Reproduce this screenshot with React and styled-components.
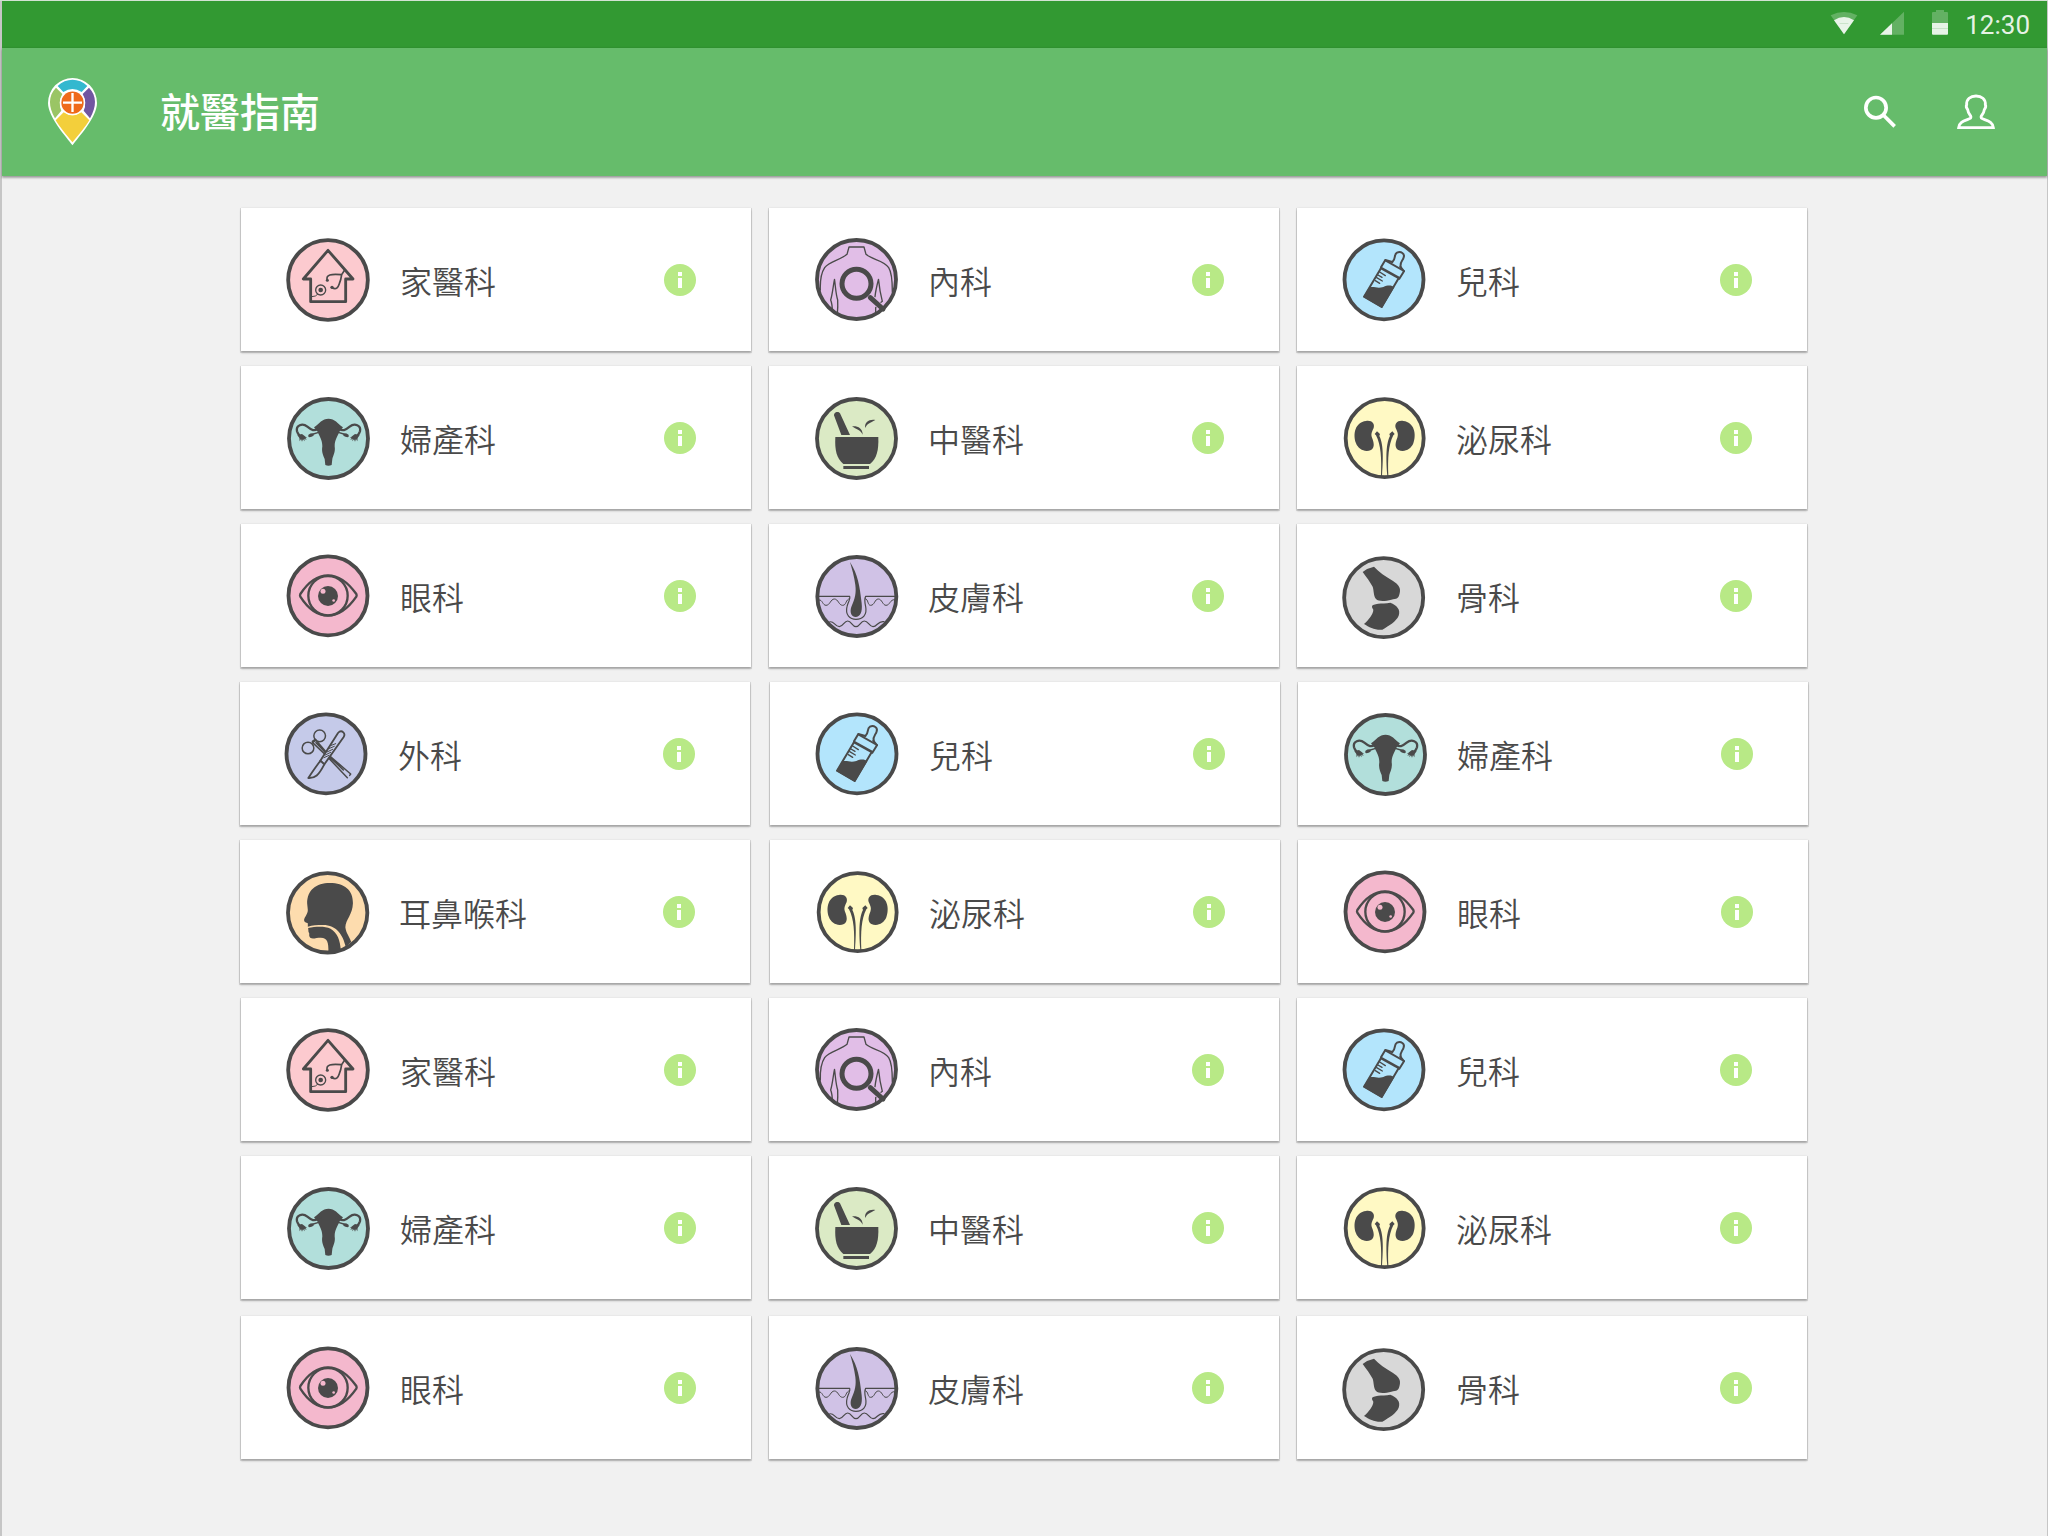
import React from "react";
import styled, { createGlobalStyle } from "styled-components";

const INK = "#4a4a4a";

const GlobalStyle = createGlobalStyle`
  * { box-sizing: border-box; }
  body {
    margin: 0;
    background: #c6c6c6;
    font-family: "Noto Sans CJK TC", "Noto Sans", sans-serif;
    color: ${INK};
  }
`;

const Screen = styled.div`
  width: 2048px;
  height: 1536px;
  padding: 1px 1px 0 2px;
  display: flex;
  flex-direction: column;
  overflow: hidden;
  background: linear-gradient(#d3e3d3 1px, #c6c6c6 1px);
`;

const StatusBar = styled.div`
  height: 47px;
  flex: none;
  display: flex;
  align-items: flex-start;
  justify-content: flex-end;
  padding: 9px 17px 0 0;
  background: #329932;
`;

const StatusGlyph = styled.svg`
  display: block;
  flex: none;
  margin-right: ${(p) => p.$after}px;
`;

const Clock = styled.time`
  font-family: Roboto, sans-serif;
  font-size: 26px;
  line-height: 30px;
  color: rgba(255, 255, 255, 0.9);
`;

const AppBar = styled.header`
  height: 128px;
  flex: none;
  display: flex;
  align-items: center;
  padding: 0 52px 0 46px;
  background: #66bc6b;
  box-shadow: 0 2px 2px rgba(0, 0, 0, 0.3), 0 0 2px rgba(0, 0, 0, 0.16);
  z-index: 1;
`;

const Logo = styled.svg`
  display: block;
  width: 49px;
  height: 68px;
`;

const Title = styled.h1`
  margin: 0 auto 5px 63px;
  font-size: 40px;
  line-height: 60px;
  font-weight: 500;
  color: #fff;
`;

const BarButton = styled.button`
  display: block;
  padding: 0;
  margin-left: ${(p) => p.$gap}px;
  border: 0;
  background: none;
  color: #fff;
  svg { display: block; }
`;

const Content = styled.main`
  flex: 1;
  padding: 32px 0 0 239px;
  background: #f1f1f1;
`;

const Row = styled.div`
  display: grid;
  grid-template-columns: ${(p) => (p.$spread ? "512px" : "510px")} 510px 510px;
  column-gap: 18px;
  margin: 0 0 ${(p) => p.$after}px ${(p) => (p.$spread ? "-1px" : "0")};
`;

const Card = styled.article`
  width: 510px;
  height: 143px;
  display: flex;
  align-items: flex-start;
  padding: 30px 55px 0 ${(p) => p.$inset}px;
  background: #fff;
  box-shadow:
    0 1px 0 1px rgba(0, 0, 0, 0.09),
    0 2px 2px rgba(0, 0, 0, 0.22),
    0 0 2px rgba(0, 0, 0, 0.1);
`;

const Badge = styled.svg`
  display: block;
  width: 84px;
  height: 84px;
  flex: none;
  overflow: visible;
`;

const Name = styled.h2`
  margin: 18px auto 0 30px;
  font-size: 32px;
  line-height: 48px;
  font-weight: 350;
`;

const InfoButton = styled.button`
  width: 32px;
  height: 32px;
  margin-top: 26px;
  padding: 8px 0 0;
  display: flex;
  flex-direction: column;
  align-items: center;
  gap: 2px;
  border: 0;
  border-radius: 50%;
  background: #b8e986;
  &::before { content: ""; width: 4px; height: 4px; background: #fff; }
  &::after { content: ""; width: 4px; height: 10px; background: #fff; }
`;

function Disc({ cx, cy, r, fill }) {
  return <circle cx={cx} cy={cy} r={r} fill={fill} stroke={INK} strokeWidth="11.5" />;
}

const line = { fill: "none", stroke: INK, strokeLinecap: "round", strokeLinejoin: "round" };

function FamilyIcon() {
  return (
    <Badge viewBox="168 144 252 252">
      <Disc cx={294} cy={270} r={119.5} fill="#fccacf" />
      <g {...line}>
        <path strokeWidth="8.5" d="M294 181 L220 267 H242 V335 H347 V267 H369 Z" />
        <circle cx="272" cy="300" r="15" strokeWidth="4" />
        <path strokeWidth="3" d="M263 313 Q258 320 246 320" />
        <path strokeWidth="5" d="M292 271 C286 254 304 251 334 254" />
        <path strokeWidth="5" d="M306 293 C320 301 325 290 328 281 C333 269 334 262 335 254 L344 240" />
      </g>
      <circle cx="272" cy="300" r="7" fill={INK} />
      <circle cx="292" cy="271" r="4.5" fill={INK} />
      <circle cx="306" cy="292" r="5" fill={INK} />
    </Badge>
  );
}

function InternalIcon() {
  return (
    <Badge viewBox="102 114 252 252">
      <Disc cx={229.5} cy={238.5} r={118.5} fill="#e1bee7" />
      <g {...line} strokeWidth="4">
        <path d="M121 270 C120 240 124 218 134 203 C148 183 182 180 201 163 L207 141 H252 L258 163 C277 180 311 180 326 203 C336 218 337 242 337 275" />
        <path d="M157 335 C157 322 157 312 152 300 C158 280 159 260 163.500 238 C167 262 167 280 173 300 C174 318 173 330 172 342" />
        <path d="M285 290 C287 270 291 255 295.500 238 C298 262 302 285 307 304 L303 307" />
        <path d="M287 322 V340" />
      </g>
      <circle cx="229.500" cy="251.500" r="43.500" fill="none" stroke={INK} strokeWidth="15" />
      <path d="M271 293 L309 327" fill="none" stroke={INK} strokeWidth="15" strokeLinecap="round" />
    </Badge>
  );
}

function PediatricIcon() {
  return (
    <Badge viewBox="156 114 252 252">
      <Disc cx={282} cy={239.5} r={118.5} fill="#b3e5fc" />
      <g {...line}>
        <path strokeWidth="6" d="M273 202 L286 180 L307 186 M331 200 L342 214 L328 236" />
        <path strokeWidth="6" d="M286 181 L342 213" />
        <path strokeWidth="6" d="M307 186 C319 178 310 164 321 158 C333 153 345 161 341 172 C339 183 329 184 332 202" />
        <path strokeWidth="8" strokeLinecap="butt" d="M271 203 L329 235" />
        <path strokeWidth="6" d="M272 206 L222 290 L275 321 L325 236" />
        <path strokeWidth="4" d="M269 216 L286 227 M264 225 L276 232 M260 233 L277 243 M256 242 L269 250" />
      </g>
      <path fill={INK} d="M238 262 C255 259 262 267 280 261 C293 255 305 255 313 262 L276 324 L220 291 Z" />
    </Badge>
  );
}

function GynecologyIcon() {
  const side = (
    <g>
      <path {...line} strokeWidth="7" d="M312 671 C330 684 338 678 350 668 C365 656 385 664 381 682 C379 690 375 693 370 698" />
      <path fill={INK} d="M366 690 L380 693 L374 702 L373 712 L369 705 L366 713 L363 706 L358 712 L359 704 L352 708 L356 701 L350 703 L358 696 Z" />
      <path {...line} strokeWidth="4" d="M316 685 L332 690" />
      <ellipse cx="339" cy="693.500" rx="9" ry="5" transform="rotate(20 339 693.500)" fill={INK} />
    </g>
  );
  return (
    <Badge viewBox="159 576 252 252">
      <Disc cx={286.5} cy={703.5} r={118.5} fill="#b2dfdb" />
      <path
        fill={INK}
        d="M286.500 644 C305 644 314 658 330 670 L320 682 C313 698 305 708 305 727 C308 745 300 755 298 765 L296 783 Q286 788 277 783 L275 765 C271 755 265 745 268 727 C268 708 260 698 253 682 L243 670 C259 658 268 644 286.500 644 Z"
      />
      {side}
      <g transform="translate(573 0) scale(-1 1)">{side}</g>
    </Badge>
  );
}

function ChineseMedicineIcon() {
  return (
    <Badge viewBox="102 588 252 252">
      <Disc cx={229.5} cy={715.5} r={118.5} fill="#dbeac5" />
      <g fill={INK}>
        <path d="M163 649 C158 638 174 631 180 640 L210 705 H184 Z" />
        <path d="M166 711 H295 C296 752 291 774 270 792 H190 C170 775 164 752 166 711 Z" />
        <path d="M190 798 H267 V807 H190 Z" />
        <path d="M216 679 C232 677 248 684 248 704 C241 690 232 690 216 679 Z" />
        <path d="M286 660 C270 656 251 667 256 684 C261 670 270 670 286 660 Z" />
      </g>
    </Badge>
  );
}

function UrologyIcon() {
  const side = (
    <g fill={INK}>
      <path d="M228 663 C246 660 255 672 251 684 C246 695 242 702 246 713 C251 725 256 742 243 750 C225 758 205 748 198 730 C188 702 195 667 228 663 Z" />
      <path d="M254 702 L261 694 L270 702 L268 708 C277 725 282 755 276 828 L273 828 C275 775 273 735 258 706 Z" />
    </g>
  );
  return (
    <Badge viewBox="156 588 252 252">
      <Disc cx={284} cy={714.5} r={117} fill="#fff9c4" />
      {side}
      <g transform="translate(568 0) scale(-1 1)">{side}</g>
    </Badge>
  );
}

function EyeIcon() {
  return (
    <Badge viewBox="168 102 252 252">
      <Disc cx={294} cy={227.5} r={118.5} fill="#f4b8cd" />
      <g {...line} strokeWidth="7">
        <circle cx="294" cy="227" r="59" />
        <path d="M211 222 C232 190 260 166 294 166 C328 166 356 190 379 222 Q381 226 379 230 C356 263 328 287 294 287 C260 287 232 263 211 230 Q209 226 211 222 Z" />
      </g>
      <circle cx="294" cy="228" r="30" fill={INK} />
      <circle cx="279" cy="214" r="7.500" fill="#f4b8cd" />
      <circle cx="311" cy="241.500" r="4" fill="#f4b8cd" />
    </Badge>
  );
}

function SkinIcon() {
  return (
    <Badge viewBox="102 102 252 252">
      <Disc cx={230.5} cy={229.5} r={118.5} fill="#d0c2e6" />
      <g {...line} strokeWidth="3.600">
        <path d="M116 229 H209 C213 238 204 245 201 260 C195 285 210 298 228 298 C248 298 262 285 257 260 C254 245 252 237 257 229 H345" />
        <path strokeWidth="3" d="M118 240 C127 238 128 256 138 256 C150 256 152 237 163 237 C175 237 176 256 188 256 C200 256 196 238 209 236" />
        <path strokeWidth="3" d="M256 236 C266 238 262 256 272 256 C284 256 284 237 295 237 C306 237 308 256 318 256 C330 256 330 238 343 239" />
        <path d="M146 307 C160 298 164 320 178 320 C190 320 192 303 203 303 C215 303 216 320 228 320 C240 320 241 303 253 303 C265 303 268 320 279 320 C292 320 294 301 312 305" />
      </g>
      <path fill={INK} d="M210 126 C234 165 239 195 245 250 C248 278 240 291 227 291 C213 291 208 275 215 258 C225 235 229 220 226 195 C223 170 216 148 210 126 Z" />
    </Badge>
  );
}

function BoneIcon() {
  return (
    <Badge viewBox="156 102 252 252">
      <Disc cx={281} cy={233} r={118.5} fill="#d8d8d8" />
      <g fill={INK}>
        <path d="M218 156 Q232 144 252 140 C266 156 287 169 308 182 C326 194 333 203 329 220 C326 237 320 236 304 239 C285 244 266 245 258 237 C250 226 252 212 248 200 C240 186 230 172 218 156 Z" />
        <path d="M246 259 C248 249 275 252 301 248 C320 256 333 268 326 287 C318 305 298 316 277 329 C255 331 238 322 222 312 C236 299 250 282 250 269 Q245 263 246 259 Z" />
      </g>
    </Badge>
  );
}

function SurgeryIcon() {
  const fill = "#c5cae9";
  return (
    <Badge viewBox="162 576 252 252">
      <Disc cx={288} cy={701.5} r={118.5} fill={fill} />
      <g {...line} strokeWidth="4.500">
        <circle cx="269" cy="647.500" r="17.500" />
        <circle cx="234" cy="684" r="17.500" />
        <path d="M258 661 L296 705 L362 762 M248 668 L290 708 L352 773 M258 668 L300 712 L340 750 M362 762 L359 766" />
        <path strokeWidth="8" d="M249 665 L256 660" />
        <path strokeWidth="5.500" fill={fill} d="M324 639 Q332 630 340 637 Q346 643 341 651 L283 733 L271 722 Z" />
        <path strokeWidth="5.500" fill={fill} d="M271 722 C258 740 246 756 235 774 C256 775 265 767 283 733 Z" />
        <path strokeWidth="3" d="M304 676 L317 671 M296 686 L313 679 M291 696 L308 688 M286 705 L302 697 M282 713 L297 706" />
      </g>
    </Badge>
  );
}

function ThroatIcon() {
  return (
    <Badge viewBox="165 90 252 252">
      <Disc cx={293} cy={218.5} r={119} fill="#fddcae" />
      <g transform="scale(1.033 1)" fill={INK}>
        <path d="M224 190 C224 150 250 129 290 129 C332 129 358 150 357 190 C356 225 336 238 335 262 C337 280 346 288 352 306 L336 320 C328 285 310 255 270 255 C252 255 240 256 226 260 L226 250 C221 247 216 248 215 240 C217 230 226 222 226 210 Z" />
        <path d="M227 264 C250 259 275 258 292 266 C312 278 320 300 322 332 L286 338 C286 305 283 294 264 293 C250 293 240 298 233 293 C227 286 233 281 228 276 Z" />
      </g>
    </Badge>
  );
}

const DEPARTMENTS = {
  family: ["家醫科", FamilyIcon],
  internal: ["內科", InternalIcon],
  pediatric: ["兒科", PediatricIcon],
  gynecology: ["婦產科", GynecologyIcon],
  chinese: ["中醫科", ChineseMedicineIcon],
  urology: ["泌尿科", UrologyIcon],
  eye: ["眼科", EyeIcon],
  skin: ["皮膚科", SkinIcon],
  bone: ["骨科", BoneIcon],
  surgery: ["外科", SurgeryIcon, 44],
  throat: ["耳鼻喉科", ThroatIcon],
};

const ROWS = [
  { items: ["family", "internal", "pediatric"] },
  { items: ["gynecology", "chinese", "urology"] },
  { items: ["eye", "skin", "bone"] },
  { items: ["surgery", "pediatric", "gynecology"], spread: true },
  { items: ["throat", "urology", "eye"], spread: true },
  { items: ["family", "internal", "pediatric"] },
  { items: ["gynecology", "chinese", "urology"], after: 17 },
  { items: ["eye", "skin", "bone"] },
];

function DepartmentCard({ id }) {
  const [name, Icon, inset = 45] = DEPARTMENTS[id];
  return (
    <Card $inset={inset}>
      <Icon />
      <Name>{name}</Name>
      <InfoButton aria-label={name} />
    </Card>
  );
}

export default function App() {
  return (
    <>
      <GlobalStyle />
      <Screen lang="zh-TW">
        <StatusBar>
          <StatusGlyph $after={22} width="28" height="26" viewBox="150 30 84 78">
            <path d="M192 103 L152 46 Q192 26 232 46 Z" fill="#fff" opacity=".24" />
            <path d="M192 103 L162 61 Q192 41 222 61 Z" fill="#fff" opacity=".86" />
            <path d="M179 70.500 H205" stroke="#329932" opacity=".25" strokeWidth="2" />
          </StatusGlyph>
          <StatusGlyph $after={28} width="24" height="26" viewBox="300 30 72 78">
            <path d="M300 104 L372 35 V104 Z" fill="#fff" opacity=".24" />
            <path d="M300 104 L336 69.500 V104 Z" fill="#fff" opacity=".86" />
          </StatusGlyph>
          <StatusGlyph $after={17} width="16" height="26" viewBox="456 30 48 78">
            <path d="M468 30 H492 V36 H501 Q504 36 504 39 V69 H456 V39 Q456 36 459 36 H468 Z" fill="#fff" opacity=".24" />
            <path d="M456 69 H504 V101 Q504 104 501 104 H459 Q456 104 456 101 Z" fill="#fff" opacity=".88" />
            <path d="M456 85.500 H504" stroke="#329932" opacity=".25" strokeWidth="2" />
          </StatusGlyph>
          <Clock>12:30</Clock>
        </StatusBar>
        <AppBar>
          <Logo viewBox="144 234 147 204">
            <path d="M217.500 436 C200 412 144 352 144 309 A73.500 75 0 0 1 291 309 C291 352 235 412 217.500 436 Z" fill="#fff" />
            <path d="M173 258 C198 233 237 233 262 258 L245 276 Q217 258 190 276 Z" fill="#33b8cf" />
            <path d="M168 263 L187 282 Q173 308 184 332 L165 355 C145 320 144 287 168 263 Z" fill="#9ac565" />
            <path d="M267 263 L248 282 Q262 308 251 332 L270 355 C290 320 291 287 267 263 Z" fill="#7156a1" />
            <path d="M191 337 Q217 355 244 337 L268 361 C257 380 233 408 217.500 427 C202 408 178 380 167 361 Z" fill="#f3cf3b" />
            <circle cx="217.500" cy="308" r="38" fill="#fff" />
            <circle cx="217.500" cy="308" r="33.500" fill="#ef6a1a" />
            <path d="M217.500 279 V336 M189 308 H246" stroke="#fff" strokeWidth="7" />
          </Logo>
          <Title>就醫指南</Title>
          <BarButton $gap={0} aria-label="search">
            <svg width="34" height="34" viewBox="249 286 102 102" fill="none" stroke="currentColor">
              <circle cx="288" cy="324" r="30.500" strokeWidth="11" />
              <path d="M310 346 L344 380" strokeWidth="11" />
            </svg>
          </BarButton>
          <BarButton $gap={60} aria-label="account">
            <svg width="38" height="36" viewBox="531 284 114 108" fill="none" stroke="currentColor" strokeWidth="8.500" strokeLinejoin="miter">
              <path d="M536 385 H640 C638 370 628 366 614 361 C603 357 601 356 604 350 C609 343 612 340 613 331 C617 326 618 320 616 316 C617 299 605 290 588 290 C571 290 559 299 560 316 C558 320 559 326 563 331 C564 340 567 343 572 350 C575 356 573 357 562 361 C548 366 538 370 536 385 Z" />
            </svg>
          </BarButton>
        </AppBar>
        <Content>
          {ROWS.map((row, i) => (
            <Row key={i} $spread={row.spread} $after={row.after ?? 15}>
              {row.items.map((id) => (
                <DepartmentCard key={id} id={id} />
              ))}
            </Row>
          ))}
        </Content>
      </Screen>
    </>
  );
}
